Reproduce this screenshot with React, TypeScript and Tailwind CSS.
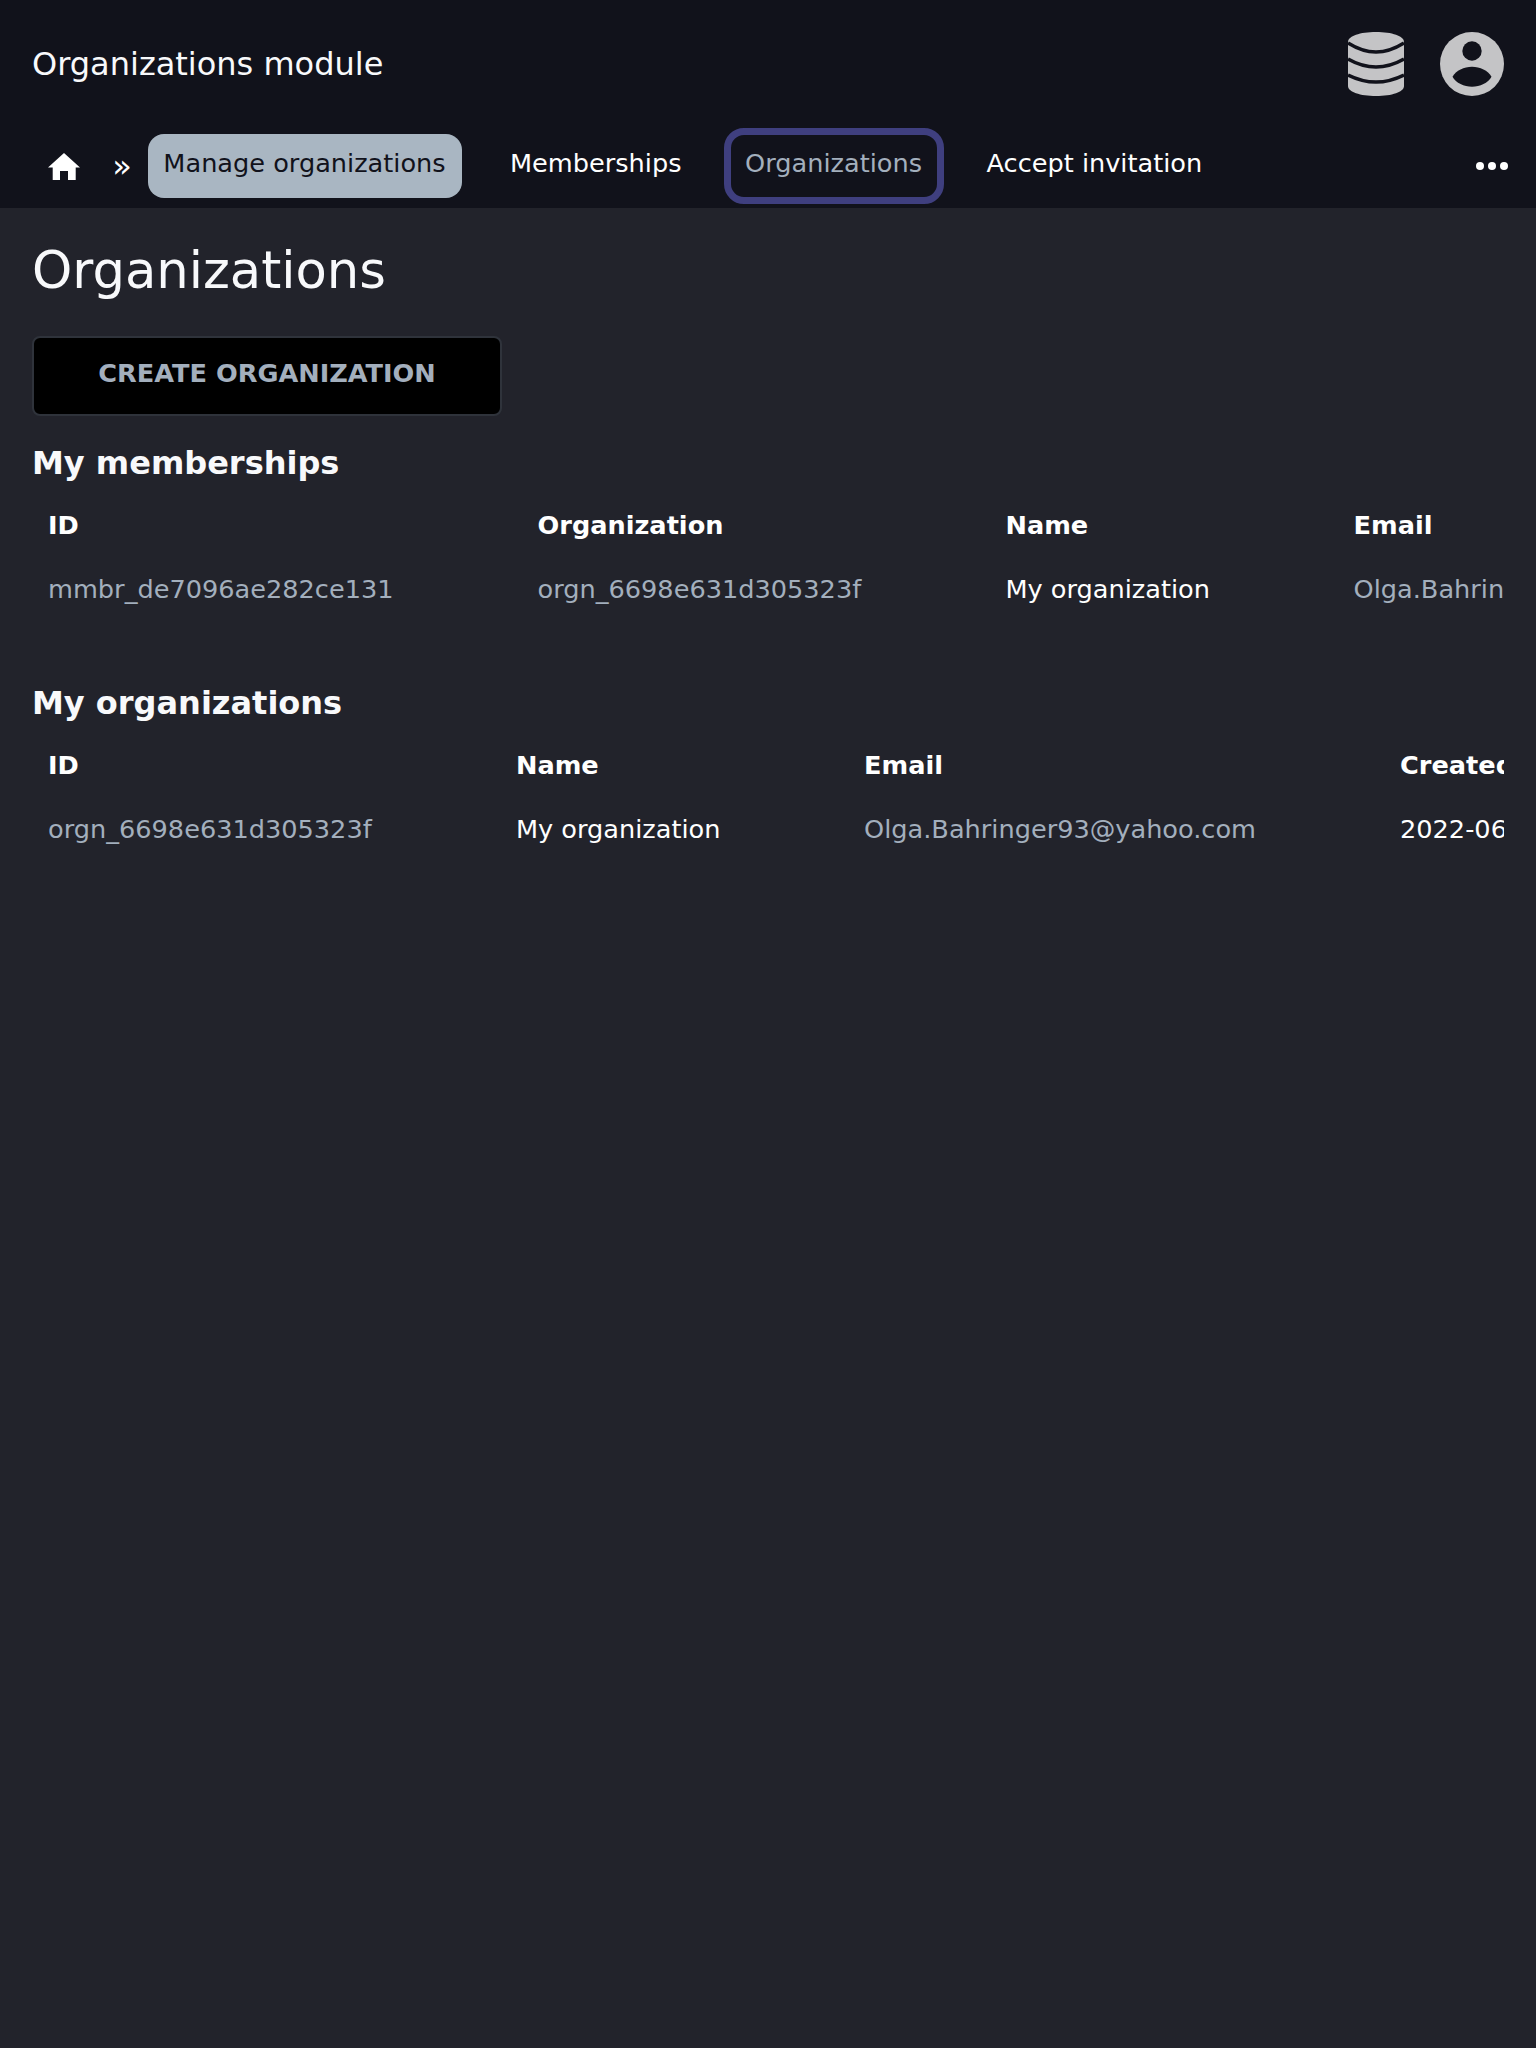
import React from "react";

const font = { fontFamily: '"DejaVu Sans", sans-serif' };

function Home() {
  return (
    <svg viewBox="0 0 32 27" className="w-[32px] h-[27px]" fill="#fff">
      <path d="M16 0 L32 14.5 L27.7 14.5 L27.7 27 L20 27 L20 18 L12 18 L12 27 L4.7 27 L4.7 14.5 L0 14.5 Z" />
    </svg>
  );
}

function Db() {
  return (
    <svg viewBox="0 0 56 64" className="w-[56px] h-[64px]">
      <path d="M0 10 C0 4 12 0 28 0 C44 0 56 4 56 10 L56 54 C56 60 44 64 28 64 C12 64 0 60 0 54 Z" fill="#c4c4c6" />
      <g fill="none" stroke="#11121b" strokeWidth="3.5">
        <path d="M0 11 Q28 29 56 11" />
        <path d="M0 27 Q28 43 56 27" />
        <path d="M0 43 Q28 57 56 43" />
      </g>
    </svg>
  );
}

function User() {
  return (
    <svg viewBox="0 0 64 64" className="w-[64px] h-[64px]">
      <circle cx="32" cy="32" r="32" fill="#c4c4c6" />
      <circle cx="32" cy="19" r="9.7" fill="#11121b" />
      <path d="M12.5 44.7 C16 38.5 24 34.7 32 34.7 C40 34.7 48 38.5 51.5 44.7 C48 51 40 54.7 32 54.7 C24 54.7 16 51 12.5 44.7 Z" fill="#11121b" />
    </svg>
  );
}

function Section({ title, widths, head, row, mt, gap }: { title: string; widths: number[]; head: string[]; row: [string, boolean][]; mt: string; gap: string }) {
  return (
    <section className={mt}>
      <h2 className="text-[32px] leading-[48px] font-bold text-[#f8f9fb]">{title}</h2>
      <div className={`overflow-hidden ${gap}`}>
        <table className="table-fixed border-collapse" style={{ width: widths.reduce((a, b) => a + b, 0) }}>
          <colgroup>
            {widths.map((w, i) => (
              <col key={i} style={{ width: w }} />
            ))}
          </colgroup>
          <thead>
            <tr>
              {head.map((h) => (
                <th key={h} className="h-[64px] px-4 text-left text-[25.6px] font-bold text-white whitespace-nowrap">
                  {h}
                </th>
              ))}
            </tr>
          </thead>
          <tbody>
            <tr>
              {row.map(([t, muted]) => (
                <td key={t} className={`h-[64px] px-4 text-[25.6px] whitespace-nowrap ${muted ? "text-[#a3afbd]" : "text-white"}`}>
                  {t}
                </td>
              ))}
            </tr>
          </tbody>
        </table>
      </div>
    </section>
  );
}

export default function App() {
  return (
    <div className="min-h-[2048px] bg-[#22232b]" style={font}>
      <header className="bg-[#11121b] h-[208px] px-8 flex flex-col">
        <div className="h-[128px] shrink-0 flex items-center justify-between">
          <div className="text-[32px] text-[#f8f9fb]">Organizations module</div>
          <div className="flex items-center gap-[36px]">
            <Db />
            <User />
          </div>
        </div>
        <nav className="flex items-center h-[76px] text-[25.6px]">
          <div className="w-[64px] flex justify-center">
            <Home />
          </div>
          <span className="w-[52px] text-center text-white text-[32px]">»</span>
          <a className="h-[64px] w-[314px] rounded-[16px] bg-[#a9b6c2] text-[#11121b] flex items-center justify-center pb-[6px] pr-[1px]">Manage organizations</a>
          <a className="h-[64px] ml-[32px] px-4 text-white flex items-center pb-[6px]">Memberships</a>
          <a className="h-[76px] ml-[26px] w-[220px] justify-center rounded-[20px] border-[7px] border-[#3f3f7f] text-[#a3afbd] flex items-center pb-[6px]">Organizations</a>
          <a className="h-[64px] ml-[27px] px-4 text-white flex items-center pb-[6px]">Accept invitation</a>
          <div className="ml-auto mr-[-4px] flex gap-[4px]">
            <span className="w-[8px] h-[8px] rounded-full bg-white" />
            <span className="w-[8px] h-[8px] rounded-full bg-white" />
            <span className="w-[8px] h-[8px] rounded-full bg-white" />
          </div>
        </nav>
      </header>
      <main className="px-8">
        <h1 className="text-[51.2px] leading-[77px] text-[#f8f9fb] pt-[24px]">Organizations</h1>
        <button className="block mt-[27px] w-[470px] h-[80px] bg-black border-2 border-[#2f333b] rounded-[8px] text-[#a3afbd] text-[25.6px] font-bold pb-[6px]">
          CREATE ORGANIZATION
        </button>
        <Section
          mt="mt-[23px]"
          gap="mt-[6px]"
          title="My memberships"
          widths={[489.5, 468, 348, 400]}
          head={["ID", "Organization", "Name", "Email"]}
          row={[
            ["mmbr_de7096ae282ce131", true],
            ["orgn_6698e631d305323f", true],
            ["My organization", false],
            ["Olga.Bahringer93@yahoo.com", true],
          ]}
        />
        <Section
          mt="mt-[58px]"
          gap="mt-[6px]"
          title="My organizations"
          widths={[468, 348, 536, 400]}
          head={["ID", "Name", "Email", "Created at"]}
          row={[
            ["orgn_6698e631d305323f", true],
            ["My organization", false],
            ["Olga.Bahringer93@yahoo.com", true],
            ["2022-06-15 10:30:00", false],
          ]}
        />
      </main>
    </div>
  );
}
